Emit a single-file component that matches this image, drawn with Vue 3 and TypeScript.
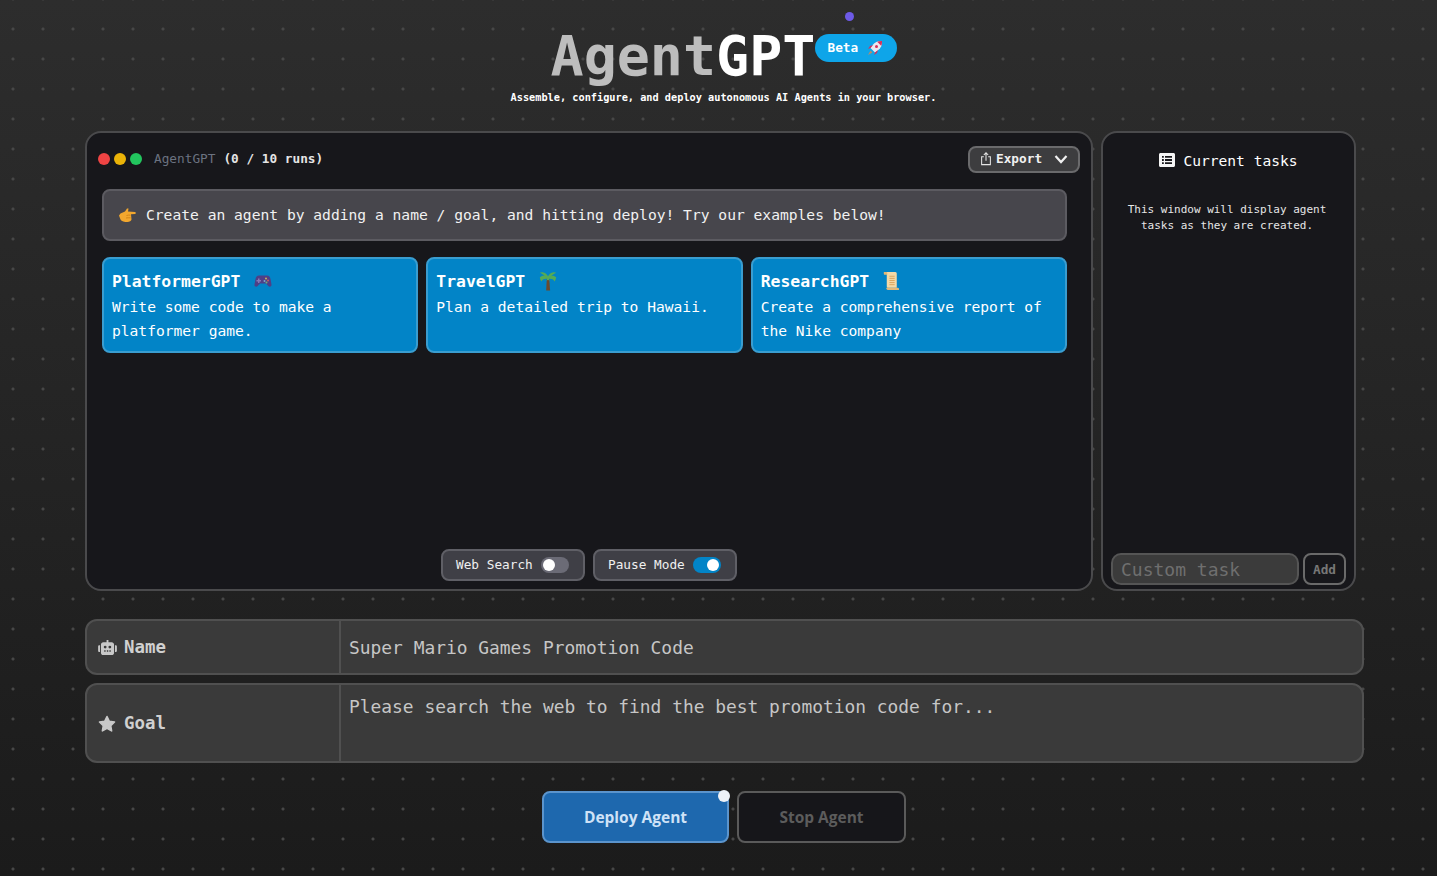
<template>
  <div class="page">
    <span class="spark"></span>
    <header class="brand">
      <div class="logo-line">
        <h1 class="logo"><span class="agent">Agent</span>GPT</h1>
        <span class="beta">
          <span>Beta</span>
          <svg class="rocket" viewBox="0 0 16 16" width="16" height="16">
            <path d="M15 1c-4-.3-7 1-9.300 4L3.500 8l4.500 4.500 3-2.200C14 8 15.300 5 15 1z" fill="#ece8ee" />
            <path d="M15 1c-1.800-.1-3.400.1-4.800.8l4 4c.7-1.400.9-3 .8-4.800z" fill="#d8315b" />
            <path d="M3.500 8 1 9l2-3 3-1zM8 12.500 7 15l3-2 1-3z" fill="#d8315b" />
            <circle cx="9.500" cy="6.500" r="1.500" fill="#d8315b" />
            <path d="M3.500 10.500 1 15l4.500-2.500z" fill="#b98a6a" />
          </svg>
        </span>
      </div>
      <p class="tagline">Assemble, configure, and deploy autonomous AI Agents in your browser.</p>
    </header>

    <div class="panels">
      <section class="window">
        <div class="win-head">
          <div class="dots"><i class="red"></i><i class="yellow"></i><i class="green"></i></div>
          <span class="win-name">AgentGPT</span>
          <span class="win-runs">(0 / 10 runs)</span>
          <button class="export">
            <svg viewBox="0 0 16 16" width="14" height="15" fill="none" stroke="#e5e5e5" stroke-width="1.200">
              <path d="M5.500 6H3v9h10V6h-2.500M8 10.500V1.500M5.500 4 8 1.500 10.500 4" />
            </svg>
            <span>Export</span>
            <svg class="chev" viewBox="0 0 16 16" width="16" height="16" fill="none" stroke="#f0f0f0" stroke-width="2.200">
              <path d="m2.500 5 5.500 6 5.500-6" />
            </svg>
          </button>
        </div>

        <div class="messages">
          <div class="hint">
            <svg viewBox="0 0 18 16" width="18" height="16">
              <path d="M1 8.500 2.500 6.500 7 4.500l2-3h1.500l-.5 3 7 .5c1 .2 1 1.800 0 2l-4 .3.500 5.200c-.3 1.500-2 2.500-4 2.500-3 0-6-.5-7-2.500z" fill="#f2a72e" />
              <path d="M8.500 8.500c1.500-.5 3-.5 4-.3M8 11c1.500-.3 3-.3 4.500-.2" stroke="#c97c12" stroke-width=".8" fill="none" />
            </svg>
            <span class="hint-text">Create an agent by adding a name / goal, and hitting deploy! Try our examples below!</span>
          </div>
          <div class="examples">
            <article v-for="ex in examples" :key="ex.name" class="example">
              <h3>
                {{ ex.name }}
                <svg v-if="ex.icon === 'game'" viewBox="0 0 18 16" width="18" height="16">
                  <path d="M5 2.500h8c2 0 3.200 1.500 3.600 4l.9 5c.3 2-1.800 3-3.200 1.500L12 10.500H6l-2.300 2.500C2.300 14.500.2 13.500.5 11.500l.9-5C1.800 4 3 2.500 5 2.500z" fill="#4f3f86" />
                  <path d="M4 5.500h1.500V7H7v1.500H5.500V10H4V8.500H2.500V7H4z" fill="#8578b5" />
                  <circle cx="12" cy="5.500" r="1" fill="#c9b25a" /><circle cx="14" cy="7.500" r="1" fill="#c9605c" /><circle cx="10.500" cy="8" r="1" fill="#7aa9cf" /><circle cx="12.500" cy="9.500" r="1" fill="#6fae7a" />
                </svg>
                <svg v-else-if="ex.icon === 'palm'" viewBox="0 0 18 19" width="18" height="20">
                  <path d="M7.800 7h2.400l.9 12H7.200z" fill="#6b4a2f" />
                  <path d="M9 7.500C7.500 4 3.500 3 .8 5.800 1 7 1.500 9 2.500 10 3.500 7.500 6 7 9 7.500zM9 7.500C10.500 4 14.500 3 17.200 5.800 17 7 16.500 9 15.500 10 14.500 7.500 12 7 9 7.500z" fill="#54ab55" />
                  <path d="M9 7C8 3.500 5.500 1 3 1.500 5 2.500 6 4 9 7zM9 7c1-3.500 3.500-6 6-5.500C13 2.500 12 4 9 7z" fill="#54ab55" stroke="#54ab55" stroke-width="1.500" />
                </svg>
                <svg v-else viewBox="0 0 16 19" width="17" height="20">
                  <path d="M2 1h9.500c1.500 0 1.500 1 1.500 2v13H5c-1.500 0-1.500-1-1.500-2V3C3.500 2 3 1 2 1z" fill="#f4d9a6" />
                  <path d="M3 16h11c1 0 1.500 1 1 2H4.500C3.500 18 3 17 3 16z" fill="#e2b877" />
                  <path d="M1 1h2c1 0 1 1 1 2.500H1C.5 2.500.5 1 1 1z" fill="#e2b877" />
                  <path d="M6 5h5M6 7h5M6 9h5M6 11h5M6 13h5" stroke="#d9a35b" stroke-width=".9" />
                </svg>
              </h3>
              <p>{{ ex.text }}</p>
            </article>
          </div>
        </div>

        <div class="toggles">
          <label v-for="t in toggles" :key="t.label" class="toggle">
            <span class="toggle-text">{{ t.label }}</span>
            <button class="switch" :class="{ on: t.on }" @click="t.on = !t.on"><i></i></button>
          </label>
        </div>
      </section>

      <aside class="tasks">
        <div class="tasks-title">
          <svg viewBox="0 0 16 14" width="16" height="14">
            <path fill-rule="evenodd" d="M1.500 0h13c.8 0 1.500.7 1.500 1.500v11c0 .8-.7 1.500-1.500 1.500h-13C.7 14 0 13.300 0 12.500v-11C0 .7.700 0 1.500 0zM3 3v1.800h1.800V3zm3 0v1.800h7V3zM3 6.100v1.800h1.800V6.100zm3 0v1.800h7V6.100zM3 9.200V11h1.800V9.200zm3 0V11h7V9.200z" fill="#f5f5f5" />
          </svg>
          <span>Current tasks</span>
        </div>
        <p class="tasks-note">This window will display agent tasks as they are created.</p>
        <div class="task-form">
          <input v-model="customTask" type="text" placeholder="Custom task" />
          <button class="add" disabled>Add</button>
        </div>
      </aside>
    </div>

    <div class="field">
      <label>
        <svg viewBox="0 0 20 16" width="19" height="15">
          <path fill-rule="evenodd" d="M9 0h2v2.500h3.500c1.400 0 2.500 1.100 2.500 2.500v8.500c0 1.400-1.100 2.500-2.500 2.500h-9C4.100 16 3 14.900 3 13.500V5c0-1.400 1.100-2.500 2.500-2.500H9zM7.500 6a1.500 1.500 0 1 0 0 3 1.500 1.500 0 0 0 0-3zm5 0a1.500 1.500 0 1 0 0 3 1.500 1.500 0 0 0 0-3zM6.500 11v1.500H8V11zm2.800 0v1.500h1.500V11zm2.700 0v1.500h1.500V11z" fill="#c8c8c8" />
          <path d="M0 7c0-.8.5-1.300 1.500-1.300h.5v7h-.5C.5 12.700 0 12.200 0 11.400zM20 7c0-.8-.5-1.300-1.500-1.300H18v7h.5c1 0 1.500-.5 1.500-1.300z" fill="#c8c8c8" />
        </svg>
        <span>Name</span>
      </label>
      <input v-model="name" type="text" />
    </div>
    <div class="field goal">
      <label>
        <svg viewBox="0 0 18 17" width="18" height="17">
          <path d="M9 1.500 11.300 6.300l5.200.7-3.800 3.700.9 5.200L9 13.400 4.400 15.900l.9-5.200L1.500 7l5.200-.7z" fill="#c8c8c8" stroke="#c8c8c8" stroke-width="1.600" stroke-linejoin="round" />
        </svg>
        <span>Goal</span>
      </label>
      <textarea v-model="goal"></textarea>
    </div>

    <div class="actions">
      <button class="deploy">Deploy Agent<i class="ping"></i></button>
      <button class="stop" disabled>Stop Agent</button>
    </div>
  </div>
</template>

<script setup lang="ts">
import { reactive, ref } from 'vue';

type Example = { name: string; text: string; icon: 'game' | 'palm' | 'scroll' };

const examples: Example[] = [
  { name: 'PlatformerGPT', text: 'Write some code to make a platformer game.', icon: 'game' },
  { name: 'TravelGPT', text: 'Plan a detailed trip to Hawaii.', icon: 'palm' },
  { name: 'ResearchGPT', text: 'Create a comprehensive report of the Nike company', icon: 'scroll' }
];

const toggles = reactive([
  { label: 'Web Search', on: false },
  { label: 'Pause Mode', on: true }
]);

const customTask = ref('');
const name = ref('Super Mario Games Promotion Code');
const goal = ref('Please search the web to find the best promotion code for...');
</script>

<style>
html, body {
  margin: 0;
  overflow: hidden;
  background: #1c1c1c;
}
</style>

<style scoped>
.page {
  position: relative;
  box-sizing: border-box;
  height: 876px;
  padding: 0 73px 0 85px;
  font-family: "DejaVu Sans Mono", "Liberation Mono", monospace;
  color: #fff;
  background-color: #1c1c1c;
  background-image:
    radial-gradient(circle, #474747 1px, transparent 2px),
    linear-gradient(180deg, #2d2d2d 0%, #1b1b1b 100%);
  background-size: 30px 30px, 100% 100%;
  background-position: -2px 14px, 0 0;
}
button, input, textarea {
  font-family: inherit;
}
.spark {
  position: absolute;
  left: 845px;
  top: 12px;
  width: 9px;
  height: 9px;
  border-radius: 50%;
  background: #6d5ae6;
}
.brand {
  height: 131px;
  padding-top: 24px;
  box-sizing: border-box;
  display: flex;
  flex-direction: column;
  align-items: center;
}
.logo-line {
  display: flex;
  align-items: flex-start;
  margin-right: 1px;
}
.logo {
  margin: 0;
  font-size: 55px;
  line-height: 64px;
  font-weight: 700;
  color: #fff;
}
.agent { color: #bdbdbd; }
.beta {
  display: flex;
  align-items: center;
  gap: 9px;
  width: 82px;
  height: 28px;
  margin-top: 10px;
  box-sizing: border-box;
  padding: 0 0 1px 12px;
  border-radius: 14px;
  background: #0ea5e9;
  font-size: 12.750px;
  font-weight: 700;
}
.tagline {
  margin: 2px 2px 0 0;
  font-size: 10.250px;
  line-height: 14px;
  font-weight: 700;
}
.panels {
  display: flex;
  gap: 8px;
  height: 460px;
  margin-bottom: 28px;
}
.window, .tasks {
  box-sizing: border-box;
  height: 100%;
  background: #17171b;
  border: 2px solid #4a4a4c;
  border-radius: 16px;
}
.window {
  width: 1008px;
  display: flex;
  flex-direction: column;
  padding: 13px 11px 8px;
}
.win-head {
  display: flex;
  align-items: center;
  height: 27px;
  font-size: 12.750px;
}
.dots {
  display: flex;
  gap: 4px;
  margin: 0 12px 2px 0;
}
.dots i {
  width: 12px;
  height: 12px;
  border-radius: 50%;
}
.red { background: #ef4444; }
.yellow { background: #eab308; }
.green { background: #22c55e; }
.win-name { color: #6b7280; margin: 0 8px 2px 0; }
.win-runs { color: #e5e5e5; font-weight: 700; margin-bottom: 2px; }
.export {
  margin-left: auto;
  display: flex;
  align-items: center;
  gap: 3px;
  box-sizing: border-box;
  width: 112px;
  height: 27px;
  padding: 0 0 2px 9px;
  background: #3d3d3f;
  border: 2px solid #6a6a6c;
  border-radius: 8px;
  color: #f0f0f0;
  font-size: 12.750px;
  font-weight: 700;
}
.chev { margin-left: 8px; }
.messages {
  padding: 16px 13px 0 4px;
  display: flex;
  flex-direction: column;
  gap: 16px;
}
.hint {
  box-sizing: border-box;
  height: 52px;
  display: flex;
  align-items: center;
  gap: 10px;
  padding: 0 14px;
  background: #47464c;
  border: 2px solid #5c5b61;
  border-radius: 8px;
  font-size: 14.630px;
  color: #f2f2f2;
}
.hint-text { margin-bottom: 2px; }
.examples {
  display: grid;
  grid-template-columns: repeat(3, 1fr);
  gap: 8px;
}
.example {
  box-sizing: border-box;
  height: 96px;
  padding: 12px 8px;
  background: #0284c7;
  border: 2px solid #3a9dd0;
  border-radius: 8px;
}
.example h3 {
  display: flex;
  align-items: center;
  gap: 14px;
  margin: 0;
  height: 20px;
  font-size: 16.400px;
  font-weight: 700;
}
.example p {
  margin: 4px 0 0;
  font-size: 14.600px;
  line-height: 24px;
}
.toggles {
  margin-top: auto;
  display: flex;
  justify-content: center;
  gap: 8px;
}
.toggle {
  box-sizing: border-box;
  width: 144px;
  height: 32px;
  display: flex;
  align-items: center;
  gap: 8px;
  padding: 0 14px 0 13px;
  background: #3f3f46;
  border: 2px solid #5f5f66;
  border-radius: 8px;
  font-size: 12.750px;
  color: #f0f0f0;
}
.toggle-text { margin-bottom: 2px; }
.switch {
  flex: none;
  width: 28px;
  height: 16px;
  padding: 0;
  border: 0;
  border-radius: 8px;
  background: #6b6b76;
  display: flex;
  align-items: center;
}
.switch i {
  width: 12px;
  height: 12px;
  margin-left: 2px;
  border-radius: 50%;
  background: #fff;
}
.switch.on { background: #0284c7; justify-content: flex-end; }
.switch.on i { margin-right: 2px; }
.tasks {
  width: 255px;
  display: flex;
  flex-direction: column;
  padding: 0 8px 4px;
}
.tasks-title {
  display: flex;
  justify-content: center;
  align-items: center;
  gap: 8px;
  margin-top: 17px;
  height: 20px;
  font-size: 14.600px;
}
.tasks-note {
  margin: 32px 0 0;
  padding: 0 13px 0 10px;
  text-align: center;
  font-size: 11px;
  line-height: 16px;
  color: #e6e6e6;
}
.task-form {
  margin-top: auto;
  display: flex;
  gap: 4px;
}
.task-form input {
  box-sizing: border-box;
  flex: 1;
  min-width: 0;
  height: 32px;
  padding: 0 8px;
  background: #3b3b3b;
  border: 2px solid #555;
  border-radius: 10px;
  font-size: 18px;
  color: #ddd;
  outline: none;
}
.task-form input::placeholder { color: #6f6f6f; opacity: 1; }
.add {
  box-sizing: border-box;
  width: 43px;
  height: 32px;
  padding: 0;
  background: #17171b;
  border: 2px solid #6a6a6a;
  border-radius: 8px;
  color: #777;
  font-size: 12.750px;
  font-weight: 700;
}
.field {
  box-sizing: border-box;
  width: 1279px;
  height: 56px;
  margin-bottom: 8px;
  display: flex;
  background: #3a3a3a;
  border: 2px solid #505050;
  border-radius: 12px;
  overflow: hidden;
}
.field.goal { height: 80px; margin-bottom: 28px; }
.field label {
  flex: none;
  box-sizing: border-box;
  width: 252px;
  display: flex;
  align-items: center;
  gap: 7px;
  padding-left: 11px;
  font-size: 17.400px;
  font-weight: 700;
  color: #d0d0d0;
}
.field.goal label { gap: 8px; }
.field input, .field textarea {
  flex: 1;
  min-width: 0;
  box-sizing: border-box;
  margin: 0;
  padding: 0 8px;
  background: transparent;
  border: 0;
  border-left: 2px solid #505050;
  font-size: 17.900px;
  color: #c6c6c6;
  outline: none;
  resize: none;
}
.field textarea { padding-top: 10px; line-height: 24px; }
.actions {
  display: flex;
  justify-content: center;
  gap: 8px;
  padding-right: 1px;
}
.deploy, .stop {
  box-sizing: border-box;
  height: 52px;
  border-radius: 8px;
  font-family: "Open Sans", "Liberation Sans", sans-serif;
  font-size: 15.500px;
  font-weight: 700;
  padding: 0;
}
.deploy {
  position: relative;
  width: 187px;
  background: #1e68ae;
  border: 2px solid #5b94cc;
  color: #cfe2f7;
}
.ping {
  position: absolute;
  right: -3px;
  top: -3px;
  width: 12px;
  height: 12px;
  border-radius: 50%;
  background: #eef2f7;
}
.stop {
  width: 169px;
  background: #16161a;
  border: 2px solid #5a5a5a;
  color: #5c5c5c;
}
</style>
